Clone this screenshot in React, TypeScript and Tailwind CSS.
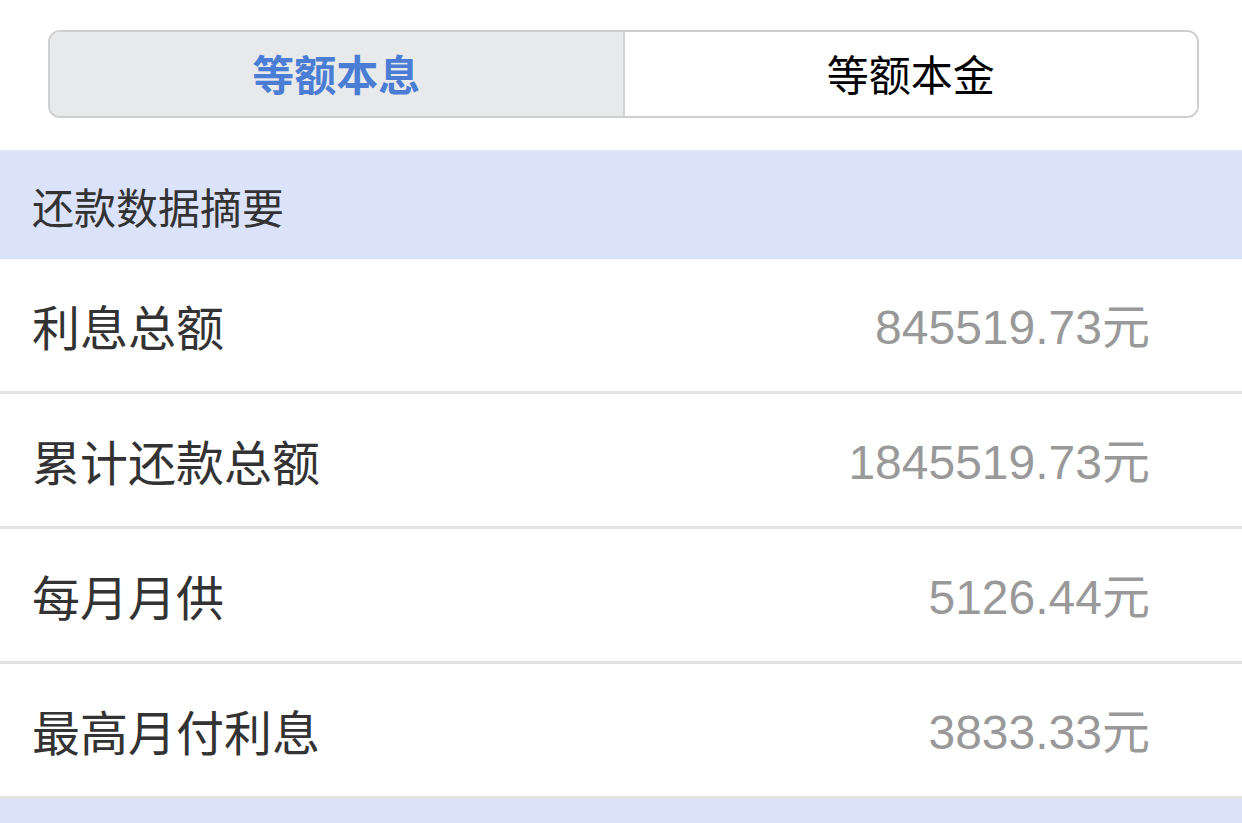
const rows = [
  { label: '利息总额', value: '845519.73' },
  { label: '累计还款总额', value: '1845519.73' },
  { label: '每月月供', value: '5126.44' },
  { label: '最高月付利息', value: '3833.33' },
];

const cjk = { fontFamily: '"Noto Sans CJK SC", sans-serif' };

export default function App() {
  return (
    <div className="w-[1242px] h-[823px] overflow-hidden bg-white" style={cjk}>
      {/* 切换 */}
      <div className="pt-[30px] pl-[48px] pr-[43px] pb-[32px]">
        <div className="flex h-[88px] rounded-[12px] border-2 border-[#cfcfcf] overflow-hidden">
          <div className="flex-1 flex items-center justify-center pb-[4px] bg-[#e8e9eb] border-r-2 border-[#d4d4d4] text-[42px] font-semibold text-[#4a7dd3]">
            等额本息
          </div>
          <div className="flex-1 flex items-center justify-center pb-[4px] bg-white text-[42px] text-black">
            等额本金
          </div>
        </div>
      </div>

      {/* 摘要 */}
      <div className="h-[109px] bg-[#dbe3fb] border-t border-[#e3e6ef] flex items-center pl-[32px] text-[42px] text-[#333]">
        还款数据摘要
      </div>

      {rows.map((r) => (
        <div
          key={r.label}
          className="h-[135px] border-b-[3px] border-[#e2e2e2] flex items-center justify-between pl-[32px] pr-[92px]"
        >
          <span className="text-[48px] text-[#333]">{r.label}</span>
          <span className="text-[48px] text-[#999]">
            <span style={{ fontFamily: '"Liberation Sans", Arial, sans-serif' }}>{r.value}</span>
            元
          </span>
        </div>
      ))}

      <div className="h-[30px] bg-[#dbe3fb]" />
    </div>
  );
}
